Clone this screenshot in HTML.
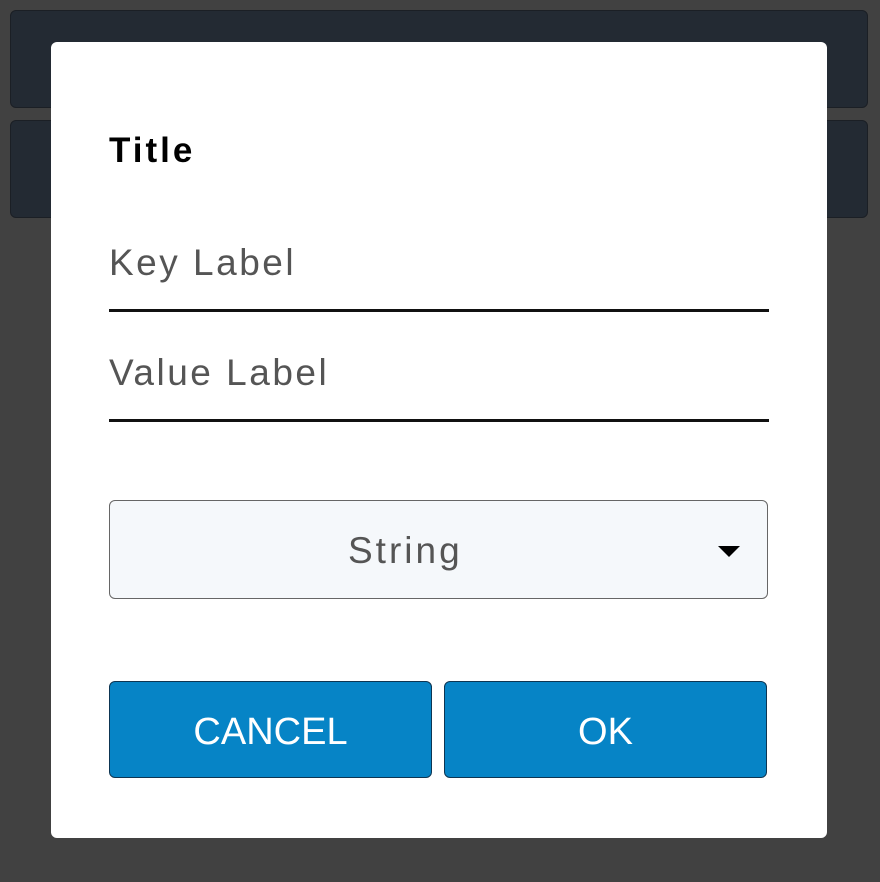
<!DOCTYPE html><html><head><style>
body{margin:0;width:880px;height:882px;background:#414141;position:relative;overflow:hidden;font-family:"Liberation Sans",sans-serif}
.card{position:absolute;left:10px;width:856px;background:#232a33;border:1px solid #1b1f25;border-radius:6px}
.dlg{position:absolute;left:51px;top:42px;width:776px;height:796px;background:#fff;border-radius:6px}
.t{position:absolute;left:109px;top:131px;font-size:35px;font-weight:bold;color:#000;letter-spacing:3px}
.lbl{position:absolute;left:109px;font-size:37px;color:#555;letter-spacing:2.5px}
.ln{position:absolute;left:109px;width:660px;height:3px;background:#111}
.sel{position:absolute;left:109px;top:500px;width:657px;height:97px;background:#f5f8fb;border:1.5px solid #666;border-radius:6px}
.sel span{position:absolute;left:238px;top:0;font-size:37px;color:#555;line-height:100px;letter-spacing:3px}
.arr{position:absolute;left:718px;top:546px;width:0;height:0;border-left:11px solid transparent;border-right:11px solid transparent;border-top:11px solid #000}
.btn{position:absolute;top:681px;width:321px;height:95px;background:#0684c6;border:1.5px solid #0d3552;border-radius:6px;color:#fff;font-size:38px;text-align:center;line-height:100px}
</style></head><body>
<div class="card" style="top:10px;height:96px"></div>
<div class="card" style="top:120px;height:96px"></div>
<div class="dlg"></div>
<div class="t">Title</div>
<div class="lbl" style="top:242px">Key Label</div>
<div class="ln" style="top:309px"></div>
<div class="lbl" style="top:352px">Value Label</div>
<div class="ln" style="top:419px"></div>
<div class="sel"><span>String</span></div>
<div class="arr"></div>
<div class="btn" style="left:109px">CANCEL</div>
<div class="btn" style="left:444px">OK</div>
</body></html>
